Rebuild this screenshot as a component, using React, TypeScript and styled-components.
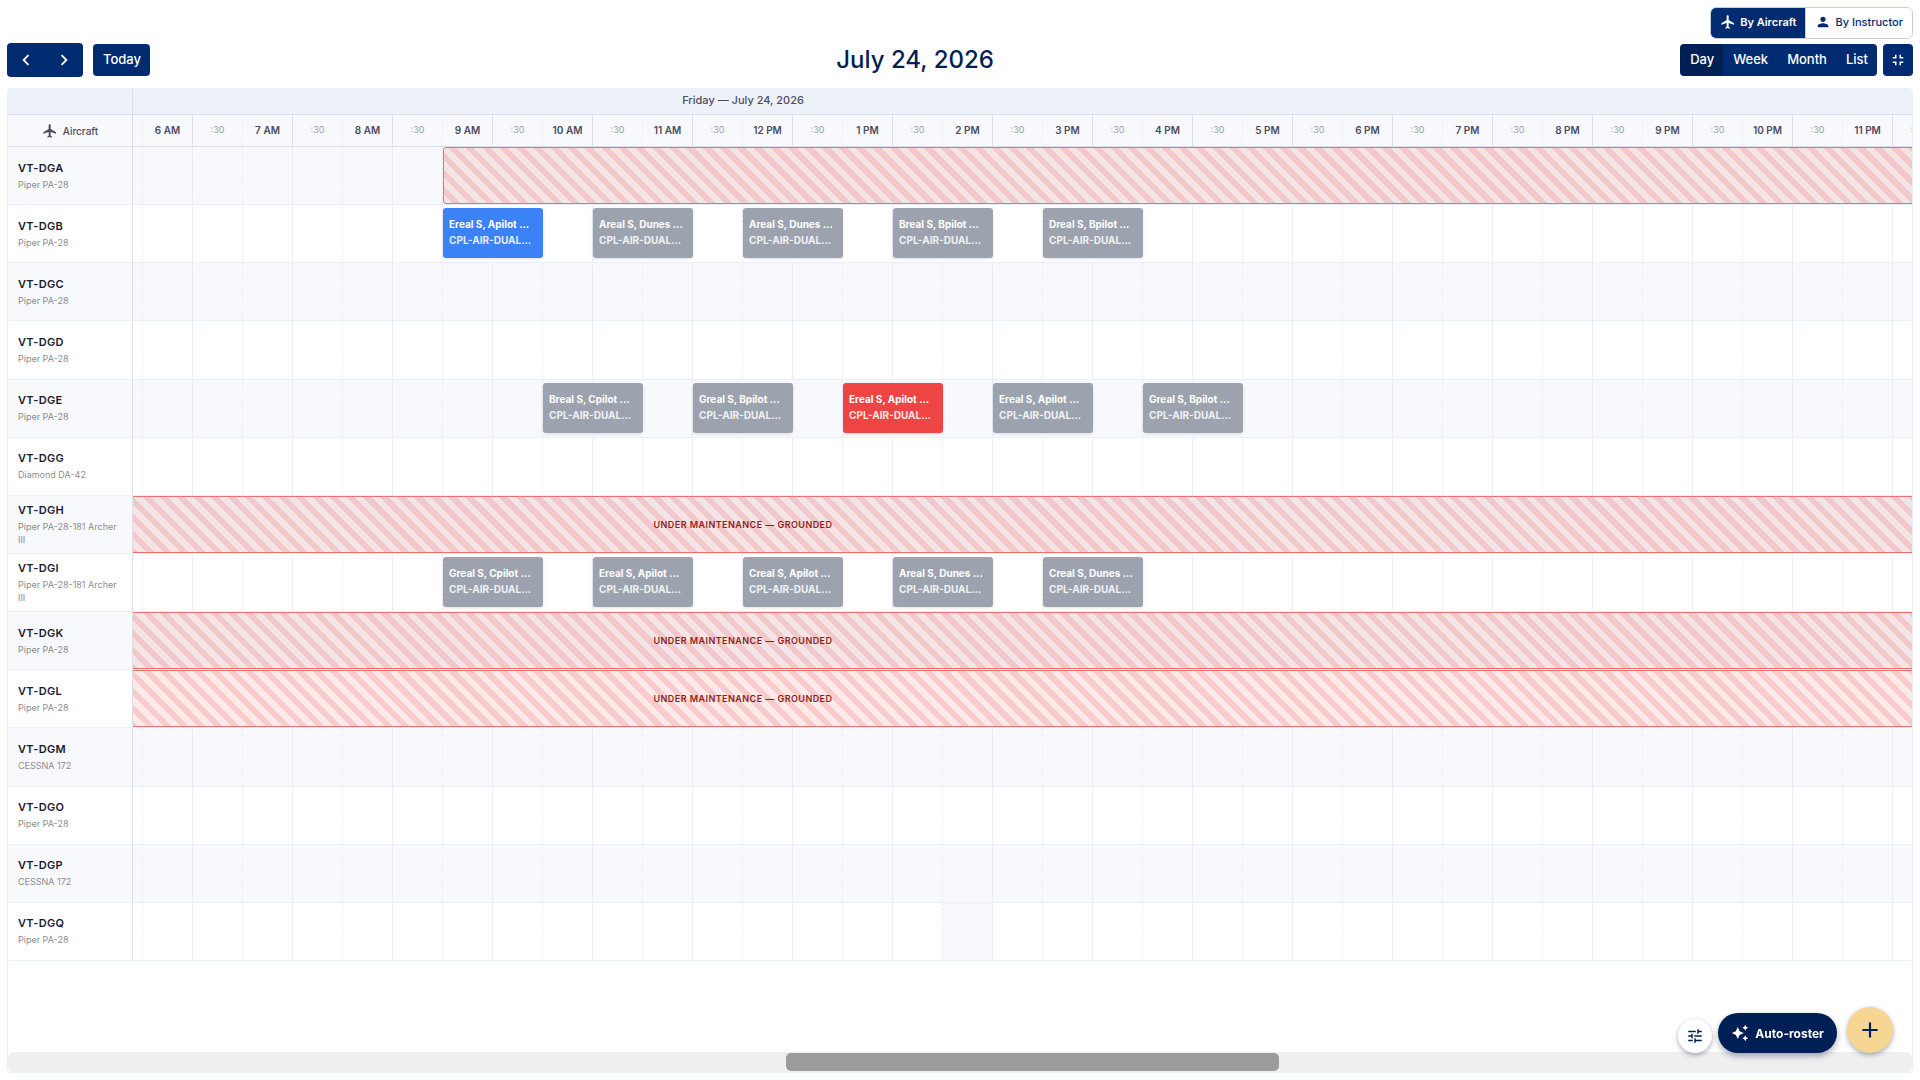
import { useLayoutEffect, useRef, useState } from "react";
import styled, { createGlobalStyle, css } from "styled-components";
import {
  MdAdd,
  MdAutoAwesome,
  MdChevronLeft,
  MdChevronRight,
  MdFlight,
  MdFullscreenExit,
  MdPerson,
  MdTune,
} from "react-icons/md";

const color = {
  navy: "#002b70",
  navyDark: "#001f54",
  band: "#edf2f9",
  stripe: "#f7f9fd",
  line: "#e9effa",
  lineDashed: "#efeff3",
  lineStrong: "#dcdfea",
  text: "#1a1a2e",
  muted: "#8b8c90",
  label: "#4d4a5c",
};

const SLOT = 50;
const SLOTS = 48;
const INITIAL_SCROLL = 590;

type Tone = "grey" | "blue" | "red";
type Lesson = { start: number; title: string; tone?: Tone };
type Aircraft = {
  id: string;
  model: string;
  lessons?: Lesson[];
  grounded?: boolean;
  blockedFrom?: number;
  hovered?: number;
};

const fleet: Aircraft[] = [
  { id: "VT-DGA", model: "Piper PA-28", blockedFrom: 9 },
  {
    id: "VT-DGB",
    model: "Piper PA-28",
    lessons: [
      { start: 9, title: "Ereal S, Apilot ...", tone: "blue" },
      { start: 10.5, title: "Areal S, Dunes ..." },
      { start: 12, title: "Areal S, Dunes ..." },
      { start: 13.5, title: "Breal S, Bpilot ..." },
      { start: 15, title: "Dreal S, Bpilot ..." },
    ],
  },
  { id: "VT-DGC", model: "Piper PA-28" },
  { id: "VT-DGD", model: "Piper PA-28" },
  {
    id: "VT-DGE",
    model: "Piper PA-28",
    lessons: [
      { start: 10, title: "Breal S, Cpilot ..." },
      { start: 11.5, title: "Greal S, Bpilot ..." },
      { start: 13, title: "Ereal S, Apilot ...", tone: "red" },
      { start: 14.5, title: "Ereal S, Apilot ..." },
      { start: 16, title: "Greal S, Bpilot ..." },
    ],
  },
  { id: "VT-DGG", model: "Diamond DA-42" },
  { id: "VT-DGH", model: "Piper PA-28-181 Archer III", grounded: true },
  {
    id: "VT-DGI",
    model: "Piper PA-28-181 Archer III",
    lessons: [
      { start: 9, title: "Greal S, Cpilot ..." },
      { start: 10.5, title: "Ereal S, Apilot ..." },
      { start: 12, title: "Creal S, Apilot ..." },
      { start: 13.5, title: "Areal S, Dunes ..." },
      { start: 15, title: "Creal S, Dunes ..." },
    ],
  },
  { id: "VT-DGK", model: "Piper PA-28", grounded: true },
  { id: "VT-DGL", model: "Piper PA-28", grounded: true },
  { id: "VT-DGM", model: "CESSNA 172" },
  { id: "VT-DGO", model: "Piper PA-28" },
  { id: "VT-DGP", model: "CESSNA 172" },
  { id: "VT-DGQ", model: "Piper PA-28", hovered: 28 },
];

const slots = Array.from({ length: SLOTS }, (_, i) => i);

// Slot 0 is midnight; even slots carry the hour, odd slots the half hour.
const slotLabel = (i: number) => {
  if (i % 2) return ":30";
  const hour = i / 2;
  return `${hour % 12 || 12} ${hour < 12 ? "AM" : "PM"}`;
};

const GlobalStyle = createGlobalStyle`
  *, *::before, *::after { box-sizing: border-box; }
  body {
    margin: 0;
    background: #fff;
    color: ${color.text};
    font-family: Inter, "Liberation Sans", sans-serif;
  }
  button { font-family: inherit; border: 0; margin: 0; padding: 0; cursor: pointer; }
`;

const Page = styled.main`
  display: flex;
  flex-direction: column;
  min-height: 100vh;
  padding: 7px;
`;

const Center = css`
  display: flex;
  align-items: center;
  justify-content: center;
`;

const ViewSwitch = styled.div`
  display: flex;
  align-self: flex-end;
  height: 32px;
  border: 1px solid #c9cedb;
  border-radius: 6px;
  overflow: hidden;
`;

const SwitchButton = styled.button<{ $active?: boolean }>`
  ${Center}
  gap: 4px;
  padding: 0 9px 2px;
  font-size: 11px;
  font-weight: ${(p) => (p.$active ? 600 : 500)};
  color: ${(p) => (p.$active ? "#fff" : color.navy)};
  background: ${(p) => (p.$active ? color.navy : "#fff")};
  & + & { border-left: 1px solid #c9cedb; }
  svg { font-size: 16px; }
`;

const Toolbar = styled.header`
  display: flex;
  align-items: center;
  justify-content: space-between;
  margin: 4px 0 11px;
`;

const ToolGroup = styled.div<{ $gap: number }>`
  display: flex;
  align-items: center;
  gap: ${(p) => p.$gap}px;
`;

const Segments = styled.div`
  display: flex;
  border-radius: 4px;
  overflow: hidden;
`;

const ToolButton = styled.button<{ $active?: boolean }>`
  ${Center}
  height: 32px;
  padding: 0 9px 2px 10px;
  font-size: 13px;
  font-weight: 500;
  color: #fff;
  background: ${(p) => (p.$active ? color.navyDark : color.navy)};
`;

const RoundedTool = styled(ToolButton)`
  border-radius: 4px;
`;

const IconTool = styled(RoundedTool)`
  width: 30px;
  padding: 0;
`;

const ArrowButton = styled(ToolButton)`
  height: 34px;
  padding: 0 8px;
`;

const Title = styled.h1`
  margin: 0;
  font-size: 24px;
  line-height: 32px;
  font-weight: 500;
  color: ${color.navyDark};
`;

const Panel = styled.section`
  display: flex;
  flex: 1;
  flex-direction: column;
  border: 1px solid ${color.line};
  border-radius: 4px;
  overflow: hidden;
`;

const Scroller = styled.div`
  display: flex;
  flex: 1;
  flex-direction: column;
  overflow-x: auto;
  scrollbar-width: none;
`;

const Line = styled.div`
  display: grid;
  grid-template-columns: 125px auto;
  width: max-content;
`;

const SideCell = styled.div`
  position: sticky;
  left: 0;
  z-index: 2;
  border-right: 1px solid ${color.lineStrong};
`;

const Lane = styled.div`
  display: grid;
  grid-template-columns: repeat(${SLOTS}, ${SLOT}px);
  grid-template-rows: minmax(0, 1fr);
`;

const BandLine = styled(Line)`
  height: 26px;
  border-bottom: 1px solid ${color.lineStrong};
  background: ${color.band};
  ${SideCell} { background: ${color.band}; }
`;

const BandLabel = styled.div`
  ${Center}
  grid-column: 1 / -1;
  padding-bottom: 3px;
  font-size: 11px;
  font-weight: 500;
  color: ${color.label};
`;

const HourLine = styled(Line)`
  height: 32px;
  border-bottom: 1px solid ${color.lineStrong};
  background: ${color.stripe};
`;

const SideHeading = styled(SideCell)`
  ${Center}
  gap: 5px;
  font-size: 10px;
  font-weight: 500;
  color: ${color.label};
  background: ${color.stripe};
  svg { font-size: 16px; }
`;

const HourCell = styled.div<{ $half: boolean }>`
  ${Center}
  padding-bottom: 2px;
  font-size: ${(p) => (p.$half ? 9 : 10)}px;
  font-weight: ${(p) => (p.$half ? 400 : 600)};
  color: ${(p) => (p.$half ? "#a0a0a8" : color.label)};
  border-right: 1px ${(p) => (p.$half ? `dashed ${color.line}` : `solid ${color.lineStrong}`)};
`;

const Body = styled.div`
  display: grid;
  flex: 1;
  grid-auto-rows: 1fr;
  width: max-content;
  padding-bottom: 91px;
`;

const Row = styled(Line)`
  border-bottom: 1px solid ${color.line};
  &, ${SideCell} { background: #fff; }
  &:nth-child(odd), &:nth-child(odd) ${SideCell} { background: ${color.stripe}; }
`;

const AircraftCell = styled(SideCell)`
  display: flex;
  flex-direction: column;
  justify-content: center;
  gap: 3px;
  padding: 0 10px;
`;

const Tail = styled.strong`
  font-size: 11px;
  line-height: 14px;
  font-weight: 600;
  letter-spacing: 0.03em;
`;

const Model = styled.span`
  font-size: 9px;
  line-height: 13px;
  color: ${color.muted};
`;

// Half-hour boundaries are dashed, the ones between hours are solid.
const Slot = styled.div<{ $half: boolean; $hovered: boolean }>`
  grid-row: 1;
  border-right: 1px ${(p) => (p.$half ? `dashed ${color.lineDashed}` : `solid ${color.line}`)};
  background: ${(p) => (p.$hovered ? color.stripe : "transparent")};
`;

const Hatch = styled.div<{ $from: number }>`
  ${Center}
  grid-row: 1;
  grid-column: ${(p) => p.$from} / -1;
  z-index: 1;
  border: 1px solid #e87272;
  border-radius: 3px 0 0 3px;
  background: repeating-linear-gradient(
    45deg,
    rgba(229, 57, 53, 0.11) 0 6px,
    rgba(229, 57, 53, 0.26) 6px 12px
  );
  font-size: 9px;
  font-weight: 600;
  letter-spacing: 0.05em;
  color: #8f1d1d;
`;

const tones: Record<Tone, string> = { grey: "#9ca3af", blue: "#3b82f6", red: "#ef4444" };

const LessonCard = styled.button<{ $start: number; $tone: Tone }>`
  grid-row: 1;
  grid-column: ${(p) => p.$start} / span 2;
  z-index: 1;
  align-self: start;
  height: 50px;
  margin-top: 3px;
  padding: 0 6px 2px;
  border-radius: 3px;
  box-shadow: 0 1px 3px rgba(0, 0, 0, 0.12);
  background: ${(p) => tones[p.$tone]};
  color: #fff;
  text-align: left;
  font-size: 10px;
  line-height: 16px;
  font-weight: 700;
`;

const Clip = styled.span<{ $soft?: boolean }>`
  display: block;
  overflow: hidden;
  text-overflow: ellipsis;
  white-space: nowrap;
  opacity: ${(p) => (p.$soft ? 0.85 : 1)};
`;

const ScrollTrack = styled.div`
  display: grid;
  grid-template-columns: 778fr 493fr 633fr;
  height: 20px;
  padding: 1px 0;
  border-radius: 6px;
  background: #efefef;
`;

const ScrollThumb = styled.div`
  grid-column: 2;
  border-radius: 5px;
  background: #9b9b9b;
`;

const Floating = styled.div`
  position: fixed;
  right: 27px;
  bottom: 27px;
  z-index: 3;
  display: flex;
  align-items: flex-end;
  gap: 10px;
`;

const FloatPair = styled.div`
  display: flex;
  align-items: flex-end;
  gap: 6px;
`;

const FloatButton = styled.button<{ $size: number; $bg: string }>`
  ${Center}
  width: ${(p) => p.$size}px;
  height: ${(p) => p.$size}px;
  border-radius: 50%;
  box-shadow: 0 2px 5px rgba(0, 20, 60, 0.35);
  background: ${(p) => p.$bg};
  color: ${color.navyDark};
`;

const RosterButton = styled.button`
  ${Center}
  gap: 6px;
  height: 40px;
  padding: 0 13px;
  border-radius: 20px;
  box-shadow: 0 3px 6px rgba(0, 20, 60, 0.35);
  background: ${color.navyDark};
  color: #fff;
  font-size: 12px;
  font-weight: 700;
`;

function Blocked({ plane }: { plane: Aircraft }) {
  if (plane.grounded) return <Hatch $from={1}>UNDER MAINTENANCE — GROUNDED</Hatch>;
  if (plane.blockedFrom) return <Hatch $from={plane.blockedFrom * 2 + 1} />;
  return null;
}

export default function App() {
  const scroller = useRef<HTMLDivElement>(null);
  const [scrolled, setScrolled] = useState(INITIAL_SCROLL);
  useLayoutEffect(() => {
    if (scroller.current) scroller.current.scrollLeft = INITIAL_SCROLL;
  }, []);

  return (
    <Page>
      <GlobalStyle />
      <ViewSwitch>
        <SwitchButton $active>
          <MdFlight />
          By Aircraft
        </SwitchButton>
        <SwitchButton>
          <MdPerson />
          By Instructor
        </SwitchButton>
      </ViewSwitch>

      <Toolbar>
        <ToolGroup $gap={10}>
          <Segments>
            <ArrowButton aria-label="Previous day">
              <MdChevronLeft size={22} />
            </ArrowButton>
            <ArrowButton aria-label="Next day">
              <MdChevronRight size={22} />
            </ArrowButton>
          </Segments>
          <RoundedTool>Today</RoundedTool>
        </ToolGroup>
        <Title>July 24, 2026</Title>
        <ToolGroup $gap={6}>
          <Segments>
            <ToolButton $active>Day</ToolButton>
            <ToolButton>Week</ToolButton>
            <ToolButton>Month</ToolButton>
            <ToolButton>List</ToolButton>
          </Segments>
          <IconTool aria-label="Exit full screen">
            <MdFullscreenExit size={18} />
          </IconTool>
        </ToolGroup>
      </Toolbar>

      <Panel>
        <Scroller ref={scroller} onScroll={(e) => setScrolled(e.currentTarget.scrollLeft)}>
          <BandLine>
            <SideCell />
            <Lane>
              <BandLabel>Friday — July 24, 2026</BandLabel>
            </Lane>
          </BandLine>
          <HourLine>
            <SideHeading>
              <MdFlight />
              Aircraft
            </SideHeading>
            <Lane>
              {slots.map((i) => (
                <HourCell key={i} $half={i % 2 === 1}>
                  {i * SLOT >= scrolled && slotLabel(i)}
                </HourCell>
              ))}
            </Lane>
          </HourLine>
          <Body>
            {fleet.map((plane) => (
              <Row key={plane.id}>
                <AircraftCell>
                  <Tail>{plane.id}</Tail>
                  <Model>{plane.model}</Model>
                </AircraftCell>
                <Lane>
                  {slots.map((i) => (
                    <Slot key={i} $half={i % 2 === 1} $hovered={plane.hovered === i} />
                  ))}
                  <Blocked plane={plane} />
                  {plane.lessons?.map((lesson) => (
                    <LessonCard
                      key={lesson.start}
                      $start={lesson.start * 2 + 1}
                      $tone={lesson.tone ?? "grey"}
                    >
                      <Clip>{lesson.title}</Clip>
                      <Clip $soft>CPL-AIR-DUAL...</Clip>
                    </LessonCard>
                  ))}
                </Lane>
              </Row>
            ))}
          </Body>
        </Scroller>
        <ScrollTrack>
          <ScrollThumb />
        </ScrollTrack>
      </Panel>

      <Floating>
        <FloatPair>
          <FloatButton $size={34} $bg="#fff" aria-label="Filters">
            <MdTune size={18} />
          </FloatButton>
          <RosterButton>
            <MdAutoAwesome size={18} />
            Auto-roster
          </RosterButton>
        </FloatPair>
        <FloatButton $size={46} $bg="#f7d593" aria-label="Add booking">
          <MdAdd size={26} />
        </FloatButton>
      </Floating>
    </Page>
  );
}
